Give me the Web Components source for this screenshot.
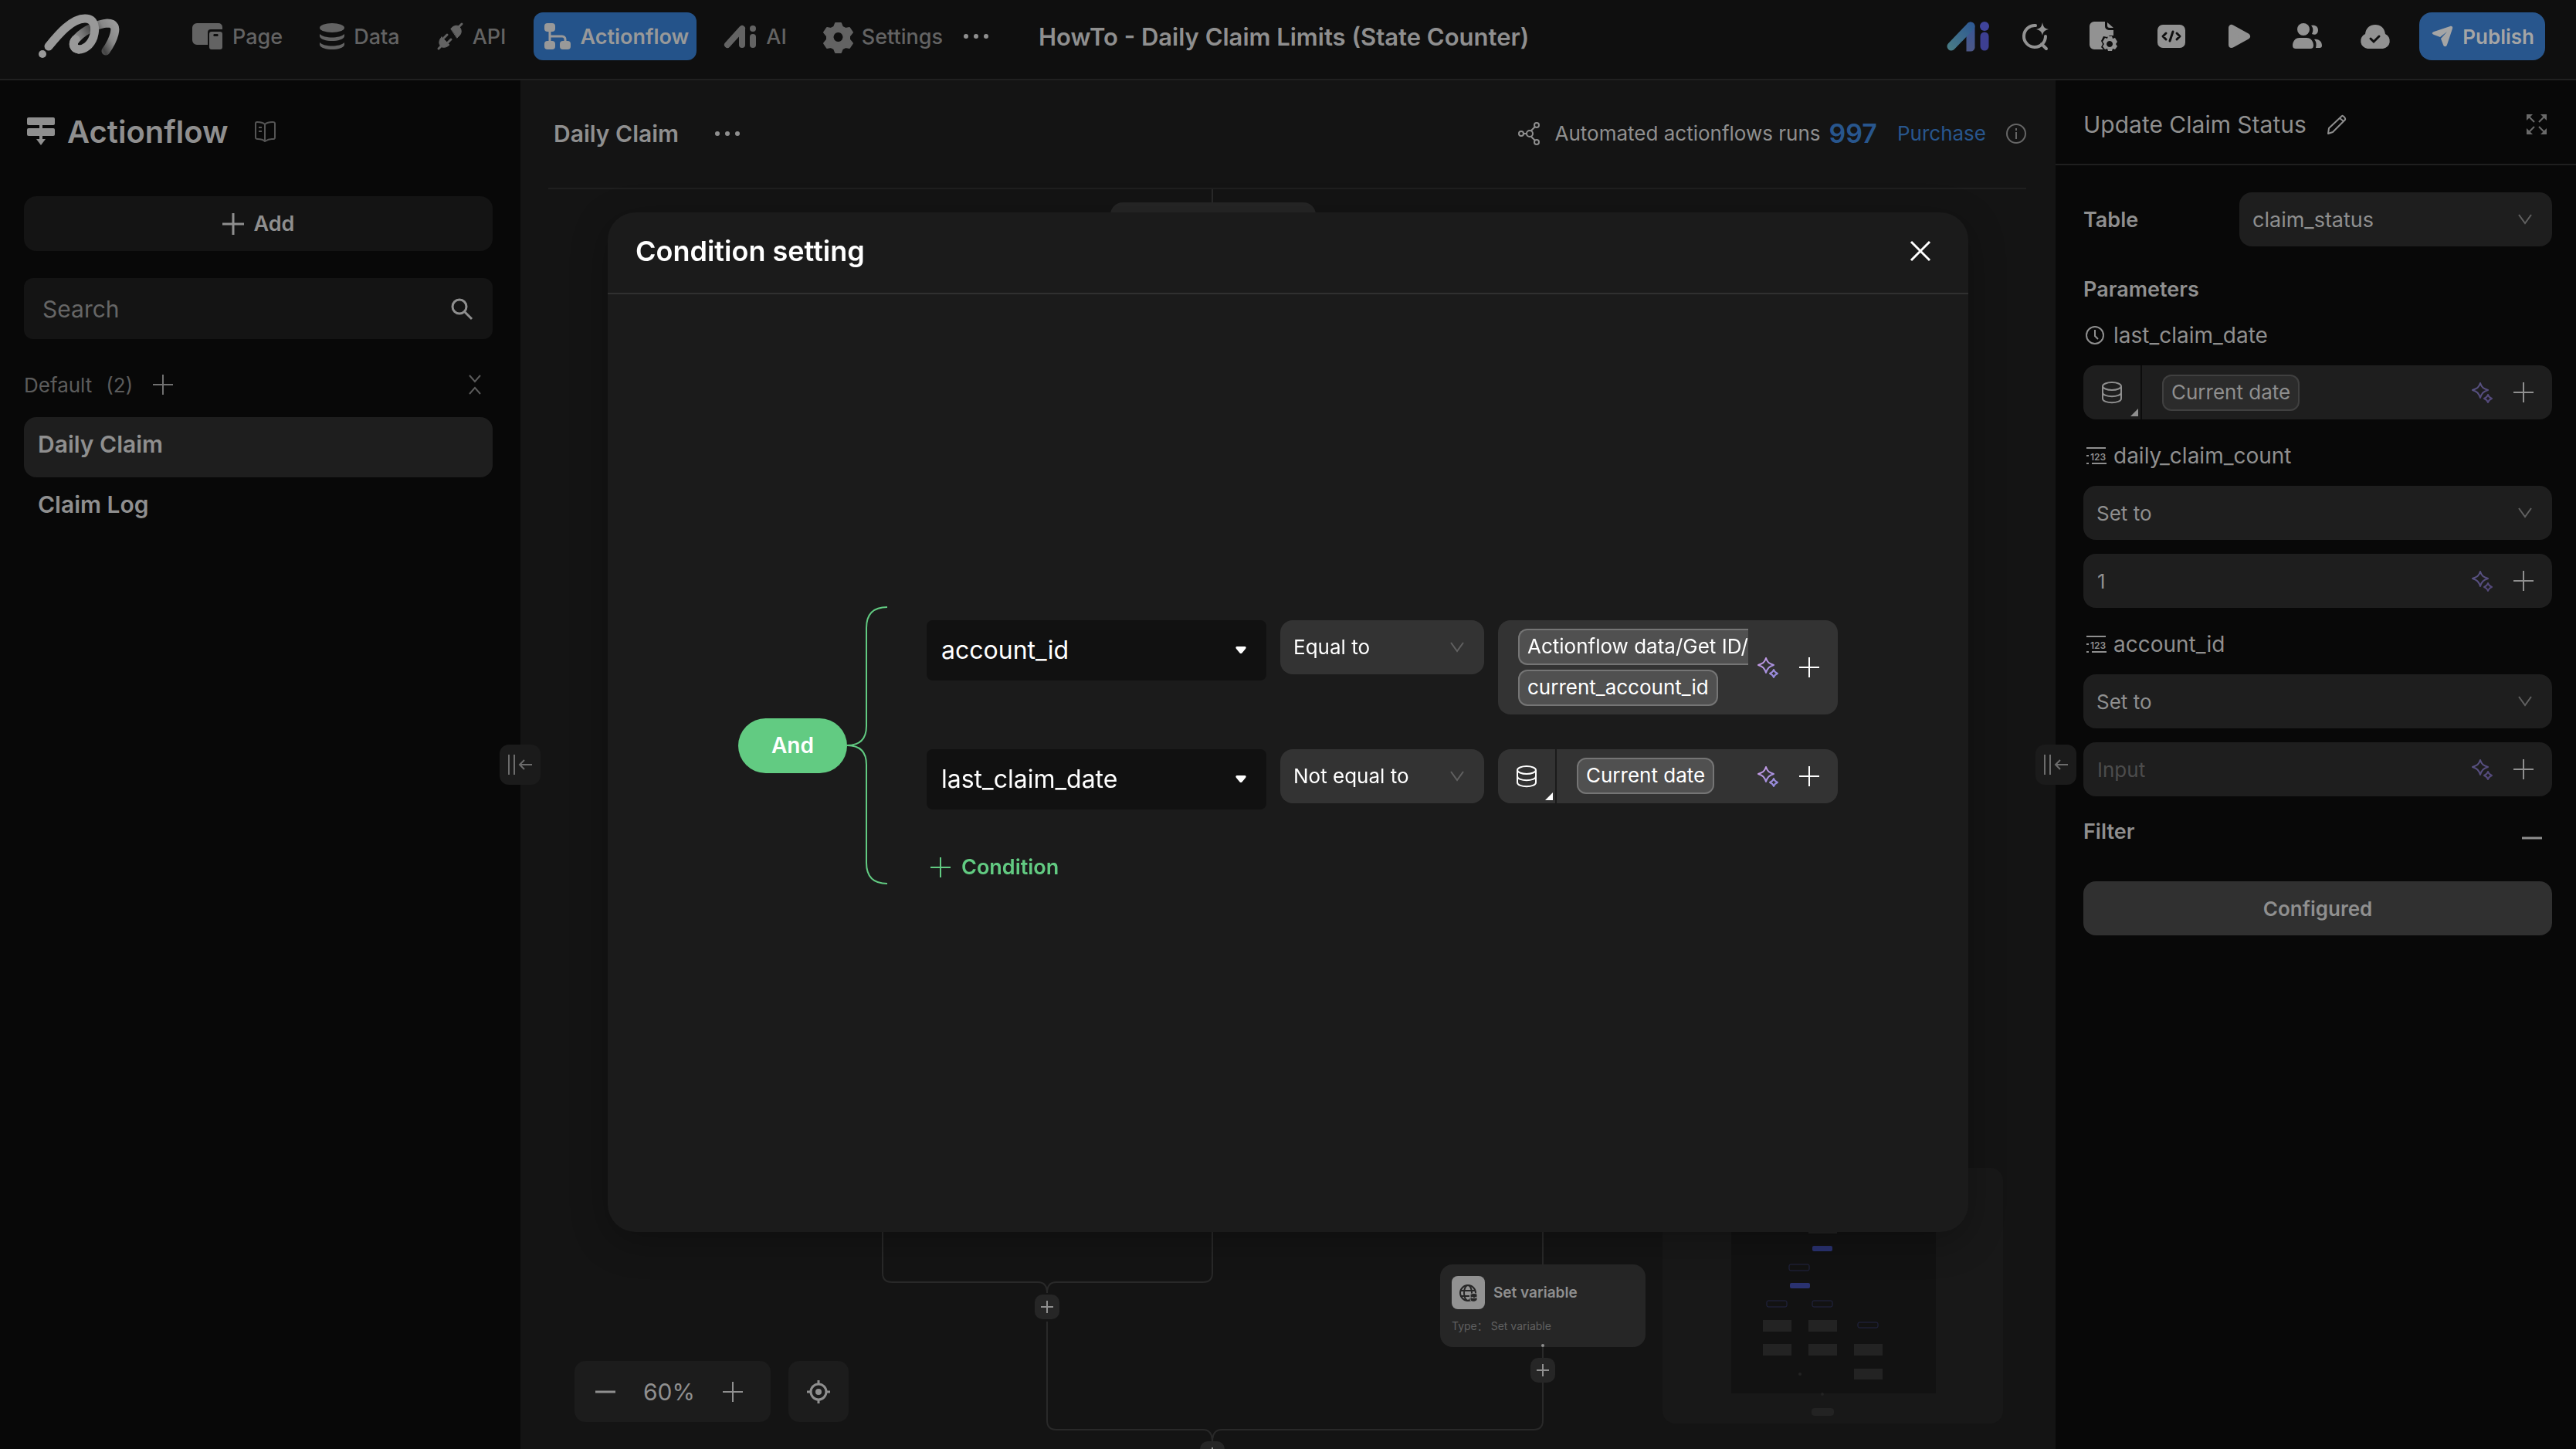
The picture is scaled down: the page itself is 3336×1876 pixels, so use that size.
<!DOCTYPE html>
<html lang="en">
<head>
<meta charset="utf-8">
<title>Actionflow</title>
<style>
  body {
    margin: 0;
    background: #080808;
  }
</style>
</head>
<body>
<app-shell></app-shell>

<script>
// Helpers -----------------------------------------------------------
const baseCss = `
  * { box-sizing: border-box; }
  button {
    display: inline-flex;
    align-items: center;
    justify-content: center;
    margin: 0;
    padding: 0;
    border: 0;
    background: none;
    color: inherit;
    font: inherit;
    cursor: pointer;
  }
  h1, h2, h3, p, ul { margin: 0; padding: 0; font: inherit; }
  a { color: inherit; text-decoration: none; }
`;

function makeTemplate(css, html) {
  const template = document.createElement('template');
  template.innerHTML = `<style>${baseCss}${css}</style>${html}`;
  return template;
}

class UiElement extends HTMLElement {
  constructor() {
    super();
    this.attachShadow({ mode: 'open' });
    this.shadowRoot.appendChild(
      this.constructor.template.content.cloneNode(true)
    );
  }
}

// Icons: [width, height, markup] ------------------------------------
const gearPath = 'M15 1h7l2 5 4 2 5-1 4 6-4 5v4l4 5-4 6-5-1-4 2-2 5h-7l-2-5-4-2-5 1-4-6 4-5v-4l-4-5 4-6 5 1 4-2z';

const icons = {
  logo: [106, 58, `
    <defs><linearGradient id="g" x1="50" y1="40" x2="100" y2="12" gradientUnits="userSpaceOnUse">
      <stop offset="0" stop-color="#999"/><stop offset=".25" stop-color="#777"/>
      <stop offset=".5" stop-color="#444"/><stop offset=".75" stop-color="#888"/><stop offset="1" stop-color="#999"/>
    </linearGradient></defs>
    <g fill="none" stroke-width="11" stroke-linecap="round">
      <path stroke="url(#g)" d="M54 46C45 45 46 36 52 31C62 20 80 13 91 12C101 12 102 18 100 26C98 34 94 41 89 48"/>
      <path stroke="#999" d="M15 42C28 26 45 6 62 6C76 6 76 20 73 30C69 41 61 46 54 46C47 45 45 38 50 33"/>
    </g>
    <circle cx="7" cy="52" r="5" fill="#999"/>`],
  page: [40, 34, `
    <path fill="currentColor" d="M6 0h28a5 5 0 0 1 5 5v3H24a4 4 0 0 0-4 4v16H6a6 6 0 0 1-6-6V6a6 6 0 0 1 6-6z"/>
    <path fill="currentColor" fill-rule="evenodd" d="M25 11h11a3 3 0 0 1 3 3v17a3 3 0 0 1-3 3H25a3 3 0 0 1-3-3V14a3 3 0 0 1 3-3zm3 3a2 2 0 0 0 0 3h5a2 2 0 0 0 0-3z"/>`],
  data: [32, 34, `
    <g fill="currentColor"><ellipse cx="16" cy="6" rx="16" ry="6"/>
    <path d="M0 14c6 6 26 6 32 0v3c-2 8-30 8-32 0zM0 25c6 6 26 6 32 0v3c-2 8-30 8-32 0z"/></g>`],
  api: [34, 34, `
    <g fill="currentColor" stroke="currentColor" stroke-linecap="round">
      <path d="M18 7c4-5 9-4 10-3 3 2 5 8 1 12l-3 3z"/><path stroke-width="3" d="M28 5l4-4"/>
      <path d="M6 18l10 10c-4 4-9 4-11 2-3-3-3-8 1-12z"/><path stroke-width="3" d="M5 30l-3 3M9 19l4-4M14 25l4-4"/>
    </g>`],
  flow: [34, 34, `
    <g fill="currentColor"><rect x="0" y="0" width="14" height="11" rx="4"/><rect x="0" y="23" width="14" height="11" rx="4"/>
    <rect x="20" y="23" width="14" height="11" rx="4"/></g>
    <path fill="none" stroke="currentColor" stroke-width="3" d="M7 10v14M7 17h16a4 4 0 0 1 4 4v3"/>`],
  aiGray: [42, 29, `
    <g stroke="currentColor" stroke-width="8" stroke-linecap="round"><path d="M4 25L23 4M23 5v20"/><path d="M37 15v10"/></g>
    <circle cx="37" cy="4" r="4" fill="currentColor"/>`],
  settings: [37, 37, `
    <path fill="currentColor" stroke="currentColor" stroke-width="2" stroke-linejoin="round" fill-rule="evenodd" d="${gearPath}M18.500 12a7 7 0 1 0 .01 0z"/>`],
  dots: [34, 8, `
    <g fill="currentColor"><circle cx="4" cy="4" r="3"/><circle cx="17" cy="4" r="3"/><circle cx="30" cy="4" r="3"/></g>`],
  aiColor: [55, 39, `
    <defs><linearGradient id="a" x1="0" y1="38" x2="36" y2="0" gradientUnits="userSpaceOnUse">
      <stop offset="0" stop-color="#4b7f84"/><stop offset="1" stop-color="#2c5694"/></linearGradient>
    <linearGradient id="b" x1="0" y1="0" x2="0" y2="38" gradientUnits="userSpaceOnUse">
      <stop offset="0" stop-color="#35569a"/><stop offset="1" stop-color="#4c5786"/></linearGradient></defs>
    <g stroke-width="11" stroke-linecap="round"><path stroke="url(#b)" d="M31 6v27h.1"/>
    <path stroke="url(#a)" d="M6 32L31 6"/><path stroke="#3d3f92" d="M49 19v13"/></g>
    <circle cx="49" cy="6" r="6" fill="#40449c"/>`],
  askAi: [34, 36, `
    <g fill="none" stroke="currentColor" stroke-width="4" stroke-linecap="round">
    <path d="M17 4A14 14 0 1 0 30 18M25 28l6 6"/></g>
    <path fill="currentColor" d="M26 0c1 6 3 8 8 9-5 1-7 3-8 8-1-5-3-7-8-8 5-1 7-3 8-9z"/>`],
  doc: [36, 38, `
    <path fill="currentColor" d="M6 0h14v6a5 5 0 0 0 5 5h6v7h-5l-3 2-5-1-3 6 2 4-2 4 3 3H6a6 6 0 0 1-6-6V6a6 6 0 0 1 6-6z"/>
    <path fill="currentColor" d="M23 1l8 7h-5a3 3 0 0 1-3-3z"/>
    <path fill="currentColor" fill-rule="evenodd" d="M24 19h5l1 3 3-1 3 5-2 3 2 3-3 4-3-1-1 3h-5l-1-3-3 1-3-4 2-3-2-3 3-5 3 1zM26 25a4 4 0 1 0 .1 0z"/>`],
  code: [36, 30, `
    <rect width="36" height="30" rx="7" fill="currentColor"/>
    <path fill="none" stroke="#0f0f0f" stroke-width="3" stroke-linecap="round" stroke-linejoin="round" d="M11 11l-4 4 4 4M20 9l-4 12M25 11l4 4-4 4"/>`],
  play: [28, 30, `
    <path fill="currentColor" stroke="currentColor" stroke-width="8" stroke-linejoin="round" d="M4 4v22l20-11z"/>`],
  people: [39, 34, `
    <g fill="currentColor"><circle cx="14" cy="8" r="8"/><path d="M9 19h9c6 0 9 5 9 10 0 3-2 4-4 4H4c-2 0-4-1-4-4 0-5 3-10 9-10z"/>
    <path d="M24 3c5-1 9 1 9 6s-4 7-8 5c2-4 2-8-1-11zM28 21c6-1 10 3 10 8 0 2-1 3-3 3h-5c1-4 1-8-2-11z"/></g>`],
  cloud: [40, 31, `
    <path fill="currentColor" d="M10 31a10 10 0 0 1-3-19C8 4 13 0 20 0s12 4 13 12a10 10 0 0 1-3 19z"/>
    <path fill="none" stroke="#0f0f0f" stroke-width="3" stroke-linecap="round" d="M14 18l4 4 7-7"/>`],
  send: [28, 28, `
    <path fill="currentColor" d="M3 8L24 1c2-1 4 1 3 3l-7 21c-1 3-4 3-5 0l-3-8 8-9-9 7-8-3c-3-1-3-3 0-4z"/>`],
  title: [36, 36, `
    <g fill="currentColor"><rect width="36" height="10" rx="2"/><rect y="14" width="36" height="10" rx="2"/>
    <path d="M16 8h4v8h-4zM16 23h4v5h4l-6 8-6-8h4z"/></g>`],
  book: [27, 27, `
    <path fill="none" stroke="currentColor" stroke-width="2" stroke-linejoin="round" d="M13 4C10 1 6 1 3 1a2 2 0 0 0-2 2v18c0 2 1 2 3 2 4 0 7 1 9 3 3-2 6-3 9-3 3 0 4 0 4-2V3c0-2-1-2-3-2-3 0-7 0-10 3zm0 0v22M5 8h4M5 13h4"/>`],
  plus: [28, 28, `<path stroke="currentColor" stroke-width="3" d="M14 0v28M0 14h28"/>`],
  plusThin: [26, 26, `<path stroke="currentColor" stroke-width="2" d="M13 0v26M0 13h26"/>`],
  plusSmall: [16, 16, `<path stroke="currentColor" stroke-width="2" d="M8 0v16M0 8h16"/>`],
  minus: [26, 26, `<path stroke="currentColor" stroke-width="3" d="M0 13h26"/>`],
  search: [28, 28, `
    <g fill="none" stroke="currentColor" stroke-width="3"><circle cx="11" cy="11" r="9"/><path d="M17 17l10 10"/></g>`],
  fold: [16, 26, `<path fill="none" stroke="currentColor" stroke-width="2" d="M1 1l7 8 7-8M1 25l7-8 7 8"/>`],
  share: [28, 30, `
    <g fill="none" stroke="currentColor" stroke-width="2"><circle cx="4" cy="15" r="3"/><circle cx="15" cy="15" r="4"/>
    <circle cx="24" cy="4" r="3"/><circle cx="24" cy="26" r="3"/><path d="M7 15h4M17 11l5-5M17 19l5 5"/></g>`],
  info: [26, 26, `
    <circle cx="13" cy="13" r="12" fill="none" stroke="currentColor" stroke-width="2"/>
    <path stroke="currentColor" stroke-width="2" d="M13 11v9M13 6v3"/>`],
  pencil: [27, 27, `
    <path fill="none" stroke="currentColor" stroke-width="2" stroke-linejoin="round" d="M20 2c1-1 5 3 4 5L8 23l-6 2 1-7zM17 5l5 4"/>`],
  expand: [26, 26, `
    <g fill="currentColor"><path d="M0 0h8L0 8zM26 0v8l-8-8zM0 26v-8l8 8zM26 26h-8l8-8z"/></g>
    <path stroke="currentColor" stroke-width="2" d="M2 2l8 8M24 2l-8 8M2 24l8-8M24 24l-8-8"/>`],
  chevron: [18, 14, `<path fill="none" stroke="currentColor" stroke-width="2" d="M1 1l8 11 8-11"/>`],
  caret: [14, 11, `<path fill="currentColor" d="M2 1h10c2 0 2 2 1 3L8 10H6L1 4C0 3 0 1 2 1z"/>`],
  clock: [24, 24, `
    <g fill="none" stroke="currentColor" stroke-width="2"><circle cx="12" cy="12" r="11"/><path d="M12 5v8l4 4"/></g>`],
  number: [28, 24, `
    <path stroke="currentColor" stroke-width="2" d="M1 2h25M1 12h3M1 22h3M8 22h19"/>
    <text x="6" y="18" font-family="Inter" font-weight="600" font-size="12" fill="currentColor">123</text>`],
  db: [26, 28, `
    <g fill="none" stroke="currentColor" stroke-width="2"><ellipse cx="13" cy="6" rx="12" ry="5"/>
    <path d="M1 6v16c0 7 24 7 24 0V6M1 14c0 7 24 7 24 0"/></g>`],
  sparkle: [28, 28, `
    <defs><linearGradient id="s" x1="0" y1="0" x2="28" y2="28" gradientUnits="userSpaceOnUse">
      <stop offset="0" stop-color="var(--spark-a, #5a5585)"/><stop offset="1" stop-color="var(--spark-b, #524678)"/></linearGradient></defs>
    <g fill="none" stroke="url(#s)" stroke-width="2" stroke-linejoin="round">
    <path d="M11 2c2 6 4 7 10 9-6 2-8 4-10 10-2-6-4-8-10-10 6-2 8-3 10-9zM21 17c1 3 2 4 5 5-3 1-4 2-5 5-1-3-2-4-5-5 3-1 4-2 5-5z"/></g>`],
  close: [26, 26, `<path stroke="currentColor" stroke-width="3" d="M1 1l24 24M25 1L1 25"/>`],
  locate: [32, 32, `
    <g fill="none" stroke="currentColor" stroke-width="3"><circle cx="16" cy="16" r="10"/><path d="M16 1v5M16 26v5M1 16h5M26 16h5"/></g>
    <circle cx="16" cy="16" r="4" fill="currentColor"/>`],
  collapse: [34, 26, `
    <g fill="none" stroke="currentColor" stroke-width="2"><path d="M2 0v26M9 0v26M16 13h16M22 7l-6 6 6 6"/></g>`],
  globe: [24, 24, `
    <g fill="none" stroke="currentColor" stroke-width="2"><circle cx="11" cy="12" r="10"/><ellipse cx="11" cy="12" rx="5" ry="10"/><path d="M1 9h20M1 16h12"/></g>
    <path fill="currentColor" stroke="#929292" d="M14 14c2-2 8-2 9 0v7c-2 3-8 3-9 0zM14 17c2 2 7 2 9 0"/>`],
};

class UiIcon extends HTMLElement {
  connectedCallback() {
    const root = this.shadowRoot || this.attachShadow({ mode: 'open' });
    const [w, h, markup] = icons[this.getAttribute('name')];
    root.innerHTML = `
      <style>:host { display: inline-flex; flex: none; } svg { display: block; overflow: visible; }</style>
      <svg width="${w}" height="${h}" viewBox="0 0 ${w} ${h}" aria-hidden="true">${markup}</svg>`;
  }
}
customElements.define('ui-icon', UiIcon);

// Header ------------------------------------------------------------
class NavItem extends UiElement {
  static template = makeTemplate(`
    :host { display: block; color: #636363; font-size: 27px; font-weight: 500; }
    :host([active]) a { padding: 0 10px 0 14px; border-radius: 12px; background: #24538a; color: #999; font-weight: 600; }
    a { display: flex; align-items: center; gap: 12px; height: 62px; }
  `, `<a href="#"><slot name="icon"></slot><slot></slot></a>`);
}
customElements.define('nav-item', NavItem);

class AppHeader extends UiElement {
  static template = makeTemplate(`
    :host { display: block; border-bottom: 2px solid #202020; background: #0f0f0f; }
    header { display: flex; align-items: center; height: 102px; padding: 0 40px 8px 48px; color: #8f8f8f; }
    nav { display: flex; align-items: center; gap: 48px; margin-left: 95px; }
    nav nav-item[active] { margin: 0 -12px; }
    h1 { margin-left: 64px; font-size: 31px; font-weight: 600; white-space: nowrap; }
    .more { margin-left: 26px; }
    .tools { display: flex; align-items: center; gap: 48px; margin-left: auto; color: #929292; }
    .tools button { width: 40px; }
    .tools .publish { gap: 12px; width: auto; height: 62px; margin-left: -11px; padding: 0 14px 0 16px; border-radius: 16px; background: #28568d; color: #a5a5a5; font-size: 26px; font-weight: 600; }
  `, `
    <header>
      <ui-icon name="logo"></ui-icon>
      <nav>
        <nav-item><ui-icon slot="icon" name="page"></ui-icon>Page</nav-item>
        <nav-item><ui-icon slot="icon" name="data"></ui-icon>Data</nav-item>
        <nav-item><ui-icon slot="icon" name="api"></ui-icon>API</nav-item>
        <nav-item active><ui-icon slot="icon" name="flow"></ui-icon>Actionflow</nav-item>
        <nav-item><ui-icon slot="icon" name="aiGray"></ui-icon>AI</nav-item>
        <nav-item><ui-icon slot="icon" name="settings"></ui-icon>Settings</nav-item>
      </nav>
      <button class="more" aria-label="More"><ui-icon name="dots"></ui-icon></button>
      <h1>HowTo - Daily Claim Limits (State Counter)</h1>
      <div class="tools">
        <button aria-label="AI copilot"><ui-icon name="aiColor"></ui-icon></button>
        <button aria-label="Search"><ui-icon name="askAi"></ui-icon></button>
        <button aria-label="Project settings"><ui-icon name="doc"></ui-icon></button>
        <button aria-label="Code"><ui-icon name="code"></ui-icon></button>
        <button aria-label="Preview"><ui-icon name="play"></ui-icon></button>
        <button aria-label="Members"><ui-icon name="people"></ui-icon></button>
        <button aria-label="Saved"><ui-icon name="cloud"></ui-icon></button>
        <button class="publish"><ui-icon name="send"></ui-icon>Publish</button>
      </div>
    </header>
  `);
}
customElements.define('app-header', AppHeader);

// Sidebar -----------------------------------------------------------
class FlowItem extends UiElement {
  static template = makeTemplate(`
    :host { display: block; }
    a { display: block; height: 78px; padding: 14px 18px; border-radius: 16px; font-size: 30px; font-weight: 600; line-height: 42px; }
    :host([selected]) a { background: #1e1e1e; }
  `, `<a href="#"><slot></slot></a>`);
}
customElements.define('flow-item', FlowItem);

class FlowSidebar extends UiElement {
  static template = makeTemplate(`
    :host { display: block; padding: 0 36px 0 31px; background: #080808; color: #8f8f8f; }
    .title { display: flex; align-items: center; gap: 16px; height: 132px; margin-bottom: 18px; padding-left: 4px; }
    h2 { font-size: 40px; font-weight: 600; }
    .title button { margin-left: 18px; color: #555; }
    .add { gap: 13px; width: 100%; height: 71px; border-radius: 16px; background: #141414; font-size: 27px; font-weight: 600; }
    .search { display: flex; align-items: center; height: 79px; margin: 35px 0 29px; padding: 0 26px 0 24px; border-radius: 12px; background: #141414; }
    input { flex: 1; min-width: 0; padding: 0; border: 0; outline: 0; background: none; color: inherit; font: inherit; font-size: 30px; }
    input::placeholder { color: #666; }
    .group { display: flex; align-items: center; height: 60px; margin-bottom: 12px; color: #5c5c5c; }
    .group span { margin-right: 18px; }
    .group button:first-of-type { margin-left: 8px; color: #707070; }
    .group button:last-of-type { margin: 0 15px 0 auto; }
  `, `
    <div class="title"><ui-icon name="title"></ui-icon><h2>Actionflow</h2>
      <button aria-label="Docs"><ui-icon name="book"></ui-icon></button></div>
    <button class="add"><ui-icon name="plus"></ui-icon>Add</button>
    <div class="search"><input type="search" placeholder="Search" aria-label="Search"><ui-icon name="search"></ui-icon></div>
    <div class="group"><span>Default</span><span>(2)</span>
      <button aria-label="Add to group"><ui-icon name="plusThin"></ui-icon></button>
      <button aria-label="Collapse group"><ui-icon name="fold"></ui-icon></button></div>
    <flow-item selected>Daily Claim</flow-item>
    <flow-item>Claim Log</flow-item>
  `);
}
customElements.define('flow-sidebar', FlowSidebar);

// Canvas ------------------------------------------------------------
class FlowNode extends UiElement {
  static template = makeTemplate(`
    :host { display: block; width: 266px; height: 107px; padding: 15px; border-radius: 16px; background: #262626; }
    .head { display: flex; align-items: center; gap: 11px; color: #8f8f8f; font-size: 19px; font-weight: 600; }
    .badge { display: grid; place-items: center; width: 43px; height: 43px; border-radius: 8px; background: #929292; color: #262626; }
    p { margin-top: 12px; color: #606060; font-size: 14px; line-height: 20px; }
  `, `
    <div class="head"><span class="badge"><ui-icon name="globe"></ui-icon></span><slot></slot></div>
    <p><slot name="type"></slot></p>
  `);
}
customElements.define('flow-node', FlowNode);

class AddStep extends UiElement {
  static template = makeTemplate(`
    :host { display: block; }
    button { width: 32px; height: 32px; border-radius: 10px; background: #262626; color: #8f8f8f; }
  `, `<button aria-label="Add step"><ui-icon name="plusSmall"></ui-icon></button>`);
}
customElements.define('add-step', AddStep);

class MiniMap extends UiElement {
  static template = makeTemplate(`
    :host { display: block; border-radius: 16px; background: #181818; overflow: hidden; }
    svg { display: block; }
  `, `
    <svg width="441" height="331" viewBox="0 0 441 331" aria-hidden="true">
      <rect x="89" y="0" width="265" height="292" fill="#121212"/>
      <g fill="#232323">
        <rect x="189" y="60" width="37" height="25"/>
        <rect x="130" y="197" width="37" height="15"/><rect x="189" y="197" width="37" height="15"/>
        <rect x="130" y="228" width="37" height="15"/><rect x="189" y="228" width="37" height="15"/><rect x="248" y="228" width="37" height="15"/>
        <rect x="248" y="260" width="37" height="14"/><rect x="193" y="311" width="29" height="10" rx="4"/>
        <circle cx="178" cy="267" r="2"/><circle cx="207" cy="293" r="2"/>
      </g>
      <g fill="#2a3270"><rect x="194" y="101" width="26" height="7" rx="2"/><rect x="165" y="149" width="26" height="7" rx="2"/></g>
      <g fill="none" stroke="#222544">
        <rect x="164" y="125" width="26" height="8" rx="2"/><rect x="135" y="172" width="26" height="8" rx="2"/>
        <rect x="194" y="172" width="26" height="8" rx="2"/><rect x="253" y="200" width="26" height="7" rx="2"/>
      </g>
    </svg>
  `);
}
customElements.define('mini-map', MiniMap);

class CollapseHandle extends UiElement {
  static template = makeTemplate(`
    :host { display: block; }
    button { width: 53px; height: 52px; border-radius: 12px; background: #1b1b1b; color: #6c6c6c; }
  `, `<button aria-label="Toggle panel"><ui-icon name="collapse"></ui-icon></button>`);
}
customElements.define('collapse-handle', CollapseHandle);

class FlowCanvas extends UiElement {
  static template = makeTemplate(`
    :host { position: relative; display: flex; flex-direction: column; min-width: 0; background: #141414; color: #8f8f8f; }
    .bar { display: flex; align-items: center; height: 141px; margin: 0 38px 0 36px; padding: 0 0 2px 7px; border-bottom: 2px solid #1f1f1f; }
    h2 { margin-right: 46px; font-size: 30px; font-weight: 600; }
    .runs { display: flex; align-items: center; margin-left: auto; }
    .runs ui-icon { margin-right: 20px; }
    .runs strong { margin: 0 26px 0 11px; color: #28568d; font-size: 34px; font-weight: 600; }
    .runs a { margin-right: 26px; color: #28568d; }
    .runs button ui-icon { margin: 0; color: #666; }
    .stage { position: relative; flex: 1; overflow: hidden; }
    .stage > * { position: absolute; }
    .edges { left: 0; top: 0; }
    .entry { left: 764px; top: 17px; width: 266px; height: 107px; border-radius: 16px; background: #262626; }
    .zoom { left: 70px; bottom: 35px; display: flex; gap: 23px; }
    .zoom div, .locate { display: flex; align-items: center; justify-content: space-between; height: 79px; border-radius: 14px; background: #1c1c1c; }
    .zoom div { width: 254px; padding: 0 36px 0 27px; font-size: 30px; }
    .locate { justify-content: center; width: 78px; }
    mini-map { right: 68px; bottom: 33px; }
    collapse-handle { position: absolute; top: 50%; translate: 0 -50%; z-index: 1; }
    .left { left: -27px; }
    .right { right: -27px; }
  `, `
    <div class="bar">
      <h2>Daily Claim</h2><button aria-label="More"><ui-icon name="dots"></ui-icon></button>
      <div class="runs"><ui-icon name="share"></ui-icon>Automated actionflows runs<strong>997</strong>
        <a href="#">Purchase</a><button aria-label="About runs"><ui-icon name="info"></ui-icon></button></div>
    </div>
    <div class="stage">
      <svg class="edges" width="1988" height="1631" fill="none" stroke="#292929" stroke-width="2" aria-hidden="true">
        <path d="M896 0v18M469 1300v103q0 12 12 12h189q12 0 12 14M896 1300v103q0 12-12 12H694q-12 0-12 14M682 1466v128q0 12 12 12h190q12 0 12 16M1324 1300v92M1324 1497v97q0 12-12 12H908q-12 0-12 16"/>
      </svg>
      <div class="entry"></div>
      <flow-node style="left:1191px;top:1392px">Set variable<span slot="type">Type： Set variable</span></flow-node>
      <svg style="left:1321px;top:1494px" width="6" height="6" aria-hidden="true"><circle cx="3" cy="3" r="2" fill="#8f8f8f"/></svg>
      <add-step style="left:666px;top:1430px"></add-step>
      <add-step style="left:1308px;top:1512px"></add-step>
      <add-step style="left:880px;top:1620px"></add-step>
      <div class="zoom">
        <div><button aria-label="Zoom out"><ui-icon name="minus"></ui-icon></button>60%<button aria-label="Zoom in"><ui-icon name="plusThin"></ui-icon></button></div>
        <button class="locate" aria-label="Center view"><ui-icon name="locate"></ui-icon></button>
      </div>
      <mini-map></mini-map>
    </div>
    <collapse-handle class="left"></collapse-handle>
    <collapse-handle class="right"></collapse-handle>
  `);
}
customElements.define('flow-canvas', FlowCanvas);

// Form controls -----------------------------------------------------
class SelectBox extends UiElement {
  static template = makeTemplate(`
    :host { display: grid; align-items: center; height: 70px; border-radius: 16px; background: var(--field, #1e1e1e); }
    ::slotted(select) {
      grid-area: 1 / 1; width: 100%; height: 100%; margin: 0; padding: 0 56px 0 17px; border: 0; outline: 0;
      appearance: none; background: none; color: inherit; font: inherit;
    }
    ui-icon { grid-area: 1 / 1; justify-self: end; margin-right: 26px; color: #606060; pointer-events: none; }
    .caret { display: none; }
    :host([dark]) { height: 78px; border-radius: 8px; background: #111; font-size: 32px; }
    :host([dark]) ::slotted(select) { padding-left: 19px; }
    :host([dark]) .chevron { display: none; }
    :host([dark]) .caret { display: flex; color: #fff; }
  `, `<slot></slot><ui-icon class="chevron" name="chevron"></ui-icon><ui-icon class="caret" name="caret"></ui-icon>`);
}
customElements.define('select-box', SelectBox);

class DataTag extends UiElement {
  static template = makeTemplate(`
    :host {
      display: block; width: max-content; height: 47px; padding: 0 10px; border: 2px solid var(--tag-line, #404040); border-radius: 12px;
      background: var(--tag, #2b2b2b); line-height: 41px; white-space: nowrap;
    }
    :host([cut]) { width: 100%; padding-right: 0; border-right: 0; border-radius: 12px 0 0 12px; overflow: hidden; }
  `, `<slot></slot>`);
}
customElements.define('data-tag', DataTag);

class ValueField extends UiElement {
  static template = makeTemplate(`
    :host { display: flex; align-items: center; min-height: 70px; padding-right: 24px; border-radius: 16px; background: var(--field, #1e1e1e); }
    .source { position: relative; display: none; align-self: stretch; width: 76px; border-right: 2px solid var(--gap, #0c0c0c); }
    .source::after { content: ""; position: absolute; right: 3px; bottom: 4px; border: 5px solid; border-color: transparent currentColor currentColor transparent; }
    :host([source]) .source { display: flex; }
    .value { flex: 1; min-width: 0; display: grid; gap: 6px; padding: 11px 12px 11px 18px; }
    :host([source]) .value { padding-left: 26px; }
    :host([multi]) .value { padding-left: 26px; }
    ::slotted(input) { width: 100%; padding: 0; border: 0; outline: 0; background: none; color: inherit; font: inherit; }
    .spark { margin-right: 26px; }
  `, `
    <button class="source" aria-label="Data source"><ui-icon name="db"></ui-icon></button>
    <div class="value"><slot></slot></div>
    <button class="spark" aria-label="Generate"><ui-icon name="sparkle"></ui-icon></button>
    <button aria-label="Insert data"><ui-icon name="plusThin"></ui-icon></button>
  `);
}
customElements.define('value-field', ValueField);

// Right panel -------------------------------------------------------
class PropertiesPanel extends UiElement {
  static template = makeTemplate(`
    :host { display: block; background: #080808; color: #8f8f8f; }
    header { display: flex; align-items: center; gap: 26px; height: 110px; padding: 6px 38px 0 36px; border-bottom: 2px solid #1f1f1f; }
    h2 { font-size: 30px; }
    header button:last-child { margin-left: auto; color: #6a6a6a; }
    .body { padding: 35px 31px 0 36px; }
    .table { display: flex; align-items: center; justify-content: space-between; }
    .table label { font-size: 27px; font-weight: 600; }
    .table select-box { width: 405px; font-size: 27px; }
    h3 { margin: 38px 0 0; font-size: 27px; line-height: 36px; font-weight: 600; }
    .name { display: flex; align-items: center; gap: 10px; height: 36px; margin: 29px 0 21px; padding-left: 3px; font-size: 28px; }
    h3 + .name { margin-top: 23px; }
    .name ui-icon { width: 26px; }
    select-box + value-field { margin-top: 18px; }
    input::placeholder { color: #4c4c4c; }
    .filter { display: flex; justify-content: space-between; align-items: center; margin: 28px 0 46px; padding-right: 13px; }
    .filter h3 { margin: 0; }
    .filter button { height: 26px; align-self: end; margin-bottom: -3px; }
    .configured { width: 100%; height: 70px; border-radius: 16px; background: #303030; font-weight: 600; }
  `, `
    <header><h2>Update Claim Status</h2><button aria-label="Rename"><ui-icon name="pencil"></ui-icon></button>
      <button aria-label="Expand"><ui-icon name="expand"></ui-icon></button></header>
    <div class="body">
      <div class="table"><label for="table">Table</label>
        <select-box><select id="table"><option>claim_status</option></select></select-box></div>
      <h3>Parameters</h3>
      <div class="name"><ui-icon name="clock"></ui-icon>last_claim_date</div>
      <value-field source><data-tag>Current date</data-tag></value-field>
      <label class="name" for="count-mode"><ui-icon name="number"></ui-icon>daily_claim_count</label>
      <select-box><select id="count-mode"><option>Set to</option></select></select-box>
      <value-field><input aria-label="daily_claim_count value" value="1"></value-field>
      <label class="name" for="account-mode"><ui-icon name="number"></ui-icon>account_id</label>
      <select-box><select id="account-mode"><option>Set to</option></select></select-box>
      <value-field><input aria-label="account_id value" placeholder="Input"></value-field>
      <div class="filter"><h3>Filter</h3><button aria-label="Remove filter"><ui-icon name="minus"></ui-icon></button></div>
      <button class="configured">Configured</button>
    </div>
  `);
}
customElements.define('properties-panel', PropertiesPanel);

// Condition dialog --------------------------------------------------
class ConditionRow extends UiElement {
  static template = makeTemplate(`
    :host { display: grid; grid-template-columns: 440px 264px 440px; align-items: start; gap: 18px; }
  `, `<slot></slot>`);
}
customElements.define('condition-row', ConditionRow);

class ConditionDialog extends UiElement {
  static template = makeTemplate(`
    :host {
      position: fixed; inset: 275px 787px 281px; display: flex; flex-direction: column; z-index: 2;
      border-radius: 36px; background: #1b1b1b; color: #fff; box-shadow: 0 12px 48px #0004;
      --field: #333; --gap: #1b1b1b; --tag: #505050; --tag-line: #757575; --spark-a: #d0a0e8; --spark-b: #8a86d8;
    }
    header { display: flex; align-items: center; justify-content: space-between; height: 106px; padding: 0 49px 4px 36px; border-bottom: 2px solid #303030; }
    h2 { font-size: 36px; font-weight: 600; }
    .body { flex: 1; display: flex; align-items: center; justify-content: center; padding-bottom: 46px; }
    .and { width: 141px; height: 71px; border-radius: 36px; background: #62cb82; font-size: 28px; font-weight: 600; }
    .brace { flex: none; margin-right: 51px; }
    .rows { display: grid; gap: 45px; padding-top: 17px; }
    .add { justify-self: start; gap: 14px; height: 44px; margin: 8px 0 0 5px; color: #62cb82; font-size: 27px; font-weight: 600; }
  `, `
    <header><h2 id="heading">Condition setting</h2><button aria-label="Close"><ui-icon name="close"></ui-icon></button></header>
    <div class="body">
      <button class="and">And</button>
      <svg class="brace" width="52" height="360" fill="none" stroke="#62cb82" stroke-width="2" aria-hidden="true">
        <path d="M52 1Q25 1 25 28V155Q25 180 0 180Q25 180 25 205V332Q25 359 52 359"/>
      </svg>
      <div class="rows">
        <condition-row>
          <select-box dark><select aria-label="Field"><option>account_id</option></select></select-box>
          <select-box><select aria-label="Operator"><option>Equal to</option></select></select-box>
          <value-field multi><data-tag cut>Actionflow data/Get ID/</data-tag><data-tag>current_account_id</data-tag></value-field>
        </condition-row>
        <condition-row>
          <select-box dark><select aria-label="Field"><option>last_claim_date</option></select></select-box>
          <select-box><select aria-label="Operator"><option>Not equal to</option></select></select-box>
          <value-field source><data-tag>Current date</data-tag></value-field>
        </condition-row>
        <button class="add"><ui-icon name="plusThin"></ui-icon>Condition</button>
      </div>
    </div>
  `);

  connectedCallback() {
    this.setAttribute('role', 'dialog');
    this.setAttribute('aria-label', 'Condition setting');
  }
}
customElements.define('condition-dialog', ConditionDialog);

// Shell -------------------------------------------------------------
class AppShell extends UiElement {
  static template = makeTemplate(`
    :host {
      display: grid; grid-template-rows: auto 1fr; height: 100vh; overflow: hidden;
      font-family: Inter, "Noto Sans CJK SC", sans-serif; font-size: 26px;
    }
    main { display: grid; grid-template-columns: 674px 1fr 674px; min-height: 0; }
  `, `
    <app-header></app-header>
    <main>
      <flow-sidebar></flow-sidebar>
      <flow-canvas></flow-canvas>
      <properties-panel></properties-panel>
    </main>
    <condition-dialog></condition-dialog>
  `);
}
customElements.define('app-shell', AppShell);
</script>
</body>
</html>
